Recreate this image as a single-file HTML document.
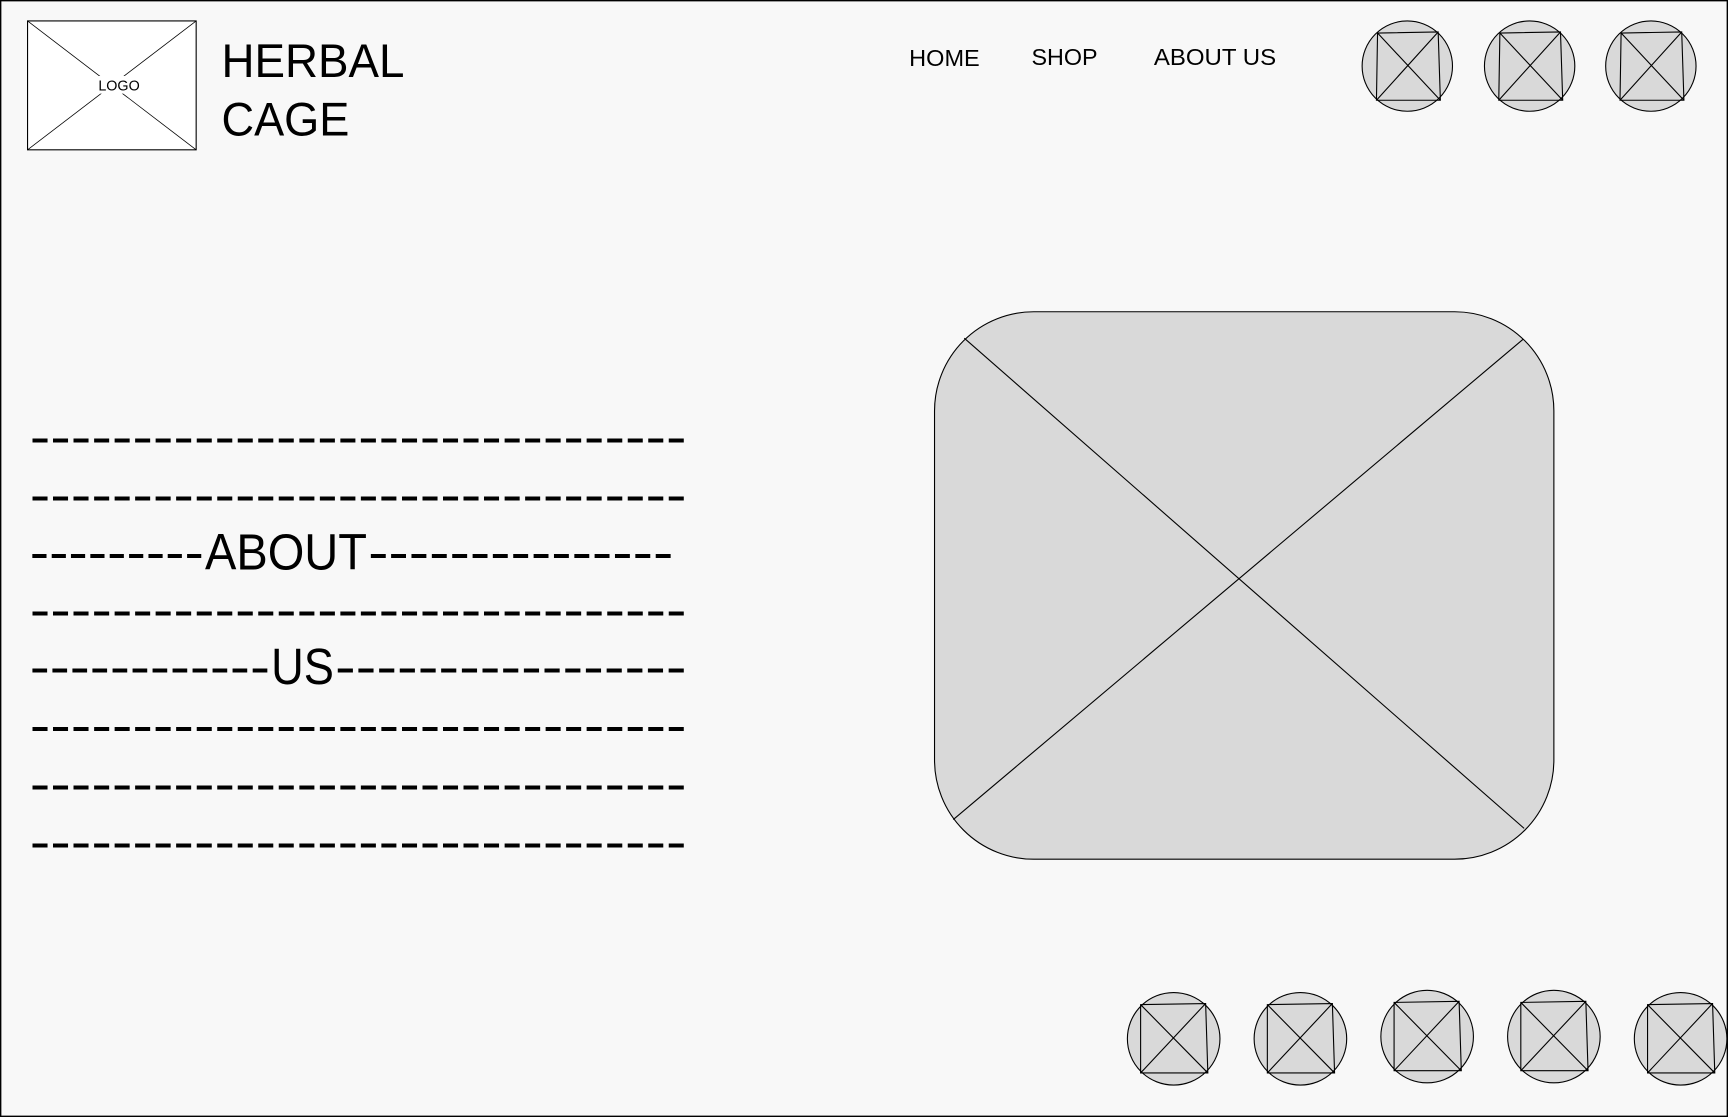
<!DOCTYPE html>
<html><head><meta charset="utf-8"><style>
html,body{margin:0;padding:0;background:#f8f8f8;}
svg{display:block;}
text{font-family:"Liberation Sans",sans-serif;fill:#000;}
</style></head><body>
<svg width="1728" height="1117" viewBox="0 0 1568 1014" preserveAspectRatio="none" xmlns="http://www.w3.org/2000/svg">
<rect x="0.5" y="0.5" width="1567" height="1013" fill="#f8f8f8" stroke="#000" stroke-width="1.5"/>
<!-- logo -->
<rect x="25" y="19" width="153" height="117" fill="#fff" stroke="#000" stroke-width="1"/>
<line x1="25" y1="19" x2="178" y2="136" stroke="#000" stroke-width="0.7"/>
<line x1="178" y1="19" x2="25" y2="136" stroke="#000" stroke-width="0.7"/>
<rect x="89" y="69" width="38" height="16" fill="#fff"/>
<text x="108" y="82" font-size="13" text-anchor="middle">LOGO</text>
<text x="201" y="70" font-size="43" textLength="166" lengthAdjust="spacingAndGlyphs">HERBAL</text>
<text x="201" y="123" font-size="43" textLength="116" lengthAdjust="spacingAndGlyphs">CAGE</text>
<!-- nav -->
<text x="825" y="60" font-size="21" textLength="64" lengthAdjust="spacingAndGlyphs">HOME</text>
<text x="936" y="59" font-size="21" textLength="60" lengthAdjust="spacingAndGlyphs">SHOP</text>
<text x="1047" y="59" font-size="21" textLength="111" lengthAdjust="spacingAndGlyphs">ABOUT US</text>
<!-- top circles -->
<g fill="#d9d9d9" stroke="#000" stroke-width="1">
<g transform="translate(1277,60)"><ellipse rx="41" ry="41"/><path d="M-27,-30 L28,-31 L30,31 L-28,31 Z M-27,-30 L30,31 M28,-31 L-28,31" fill="none"/></g>
<g transform="translate(1388,60)"><ellipse rx="41" ry="41"/><path d="M-27,-30 L28,-31 L30,31 L-28,31 Z M-27,-30 L30,31 M28,-31 L-28,31" fill="none"/></g>
<g transform="translate(1498,60)"><ellipse rx="41" ry="41"/><path d="M-27,-30 L28,-31 L30,31 L-28,31 Z M-27,-30 L30,31 M28,-31 L-28,31" fill="none"/></g>
</g>
<!-- big image -->
<rect x="848" y="283" width="562" height="497" rx="90" ry="90" fill="#d9d9d9" stroke="#000" stroke-width="1"/>
<line x1="875" y1="307" x2="1383" y2="752" stroke="#000" stroke-width="1"/>
<line x1="1382" y1="308" x2="865" y2="744" stroke="#000" stroke-width="1"/>
<!-- dashes -->
<g font-size="46">
<text x="27" y="412" textLength="596" lengthAdjust="spacingAndGlyphs">--------------------------------</text>
<text x="27" y="465" textLength="596" lengthAdjust="spacingAndGlyphs">--------------------------------</text>
<text x="27" y="517" textLength="158" lengthAdjust="spacingAndGlyphs">---------</text>
<text x="186" y="517" textLength="147" lengthAdjust="spacingAndGlyphs">ABOUT</text>
<text x="334" y="517" textLength="277" lengthAdjust="spacingAndGlyphs">---------------</text>
<text x="27" y="569" textLength="596" lengthAdjust="spacingAndGlyphs">--------------------------------</text>
<text x="27" y="621" textLength="218" lengthAdjust="spacingAndGlyphs">------------</text>
<text x="246" y="621" textLength="57" lengthAdjust="spacingAndGlyphs">US</text>
<text x="304" y="621" textLength="319" lengthAdjust="spacingAndGlyphs">-----------------</text>
<text x="27" y="674" textLength="596" lengthAdjust="spacingAndGlyphs">--------------------------------</text>
<text x="27" y="727" textLength="596" lengthAdjust="spacingAndGlyphs">--------------------------------</text>
<text x="27" y="780" textLength="596" lengthAdjust="spacingAndGlyphs">--------------------------------</text>
</g>
<!-- bottom circles -->
<g fill="#d9d9d9" stroke="#000" stroke-width="1">
<g transform="translate(1065,943)"><ellipse rx="42" ry="42"/><path d="M-30,-31 L29,-32 L31,31 L-30,31 Z M-30,-31 L31,31 M29,-32 L-30,31" fill="none"/></g>
<g transform="translate(1180,943)"><ellipse rx="42" ry="42"/><path d="M-30,-31 L29,-32 L31,31 L-30,31 Z M-30,-31 L31,31 M29,-32 L-30,31" fill="none"/></g>
<g transform="translate(1295,941)"><ellipse rx="42" ry="42"/><path d="M-30,-31 L29,-32 L31,31 L-30,31 Z M-30,-31 L31,31 M29,-32 L-30,31" fill="none"/></g>
<g transform="translate(1410,941)"><ellipse rx="42" ry="42"/><path d="M-30,-31 L29,-32 L31,31 L-30,31 Z M-30,-31 L31,31 M29,-32 L-30,31" fill="none"/></g>
<g transform="translate(1525,943)"><ellipse rx="42" ry="42"/><path d="M-30,-31 L29,-32 L31,31 L-30,31 Z M-30,-31 L31,31 M29,-32 L-30,31" fill="none"/></g>
</g>
</svg>
</body></html>
